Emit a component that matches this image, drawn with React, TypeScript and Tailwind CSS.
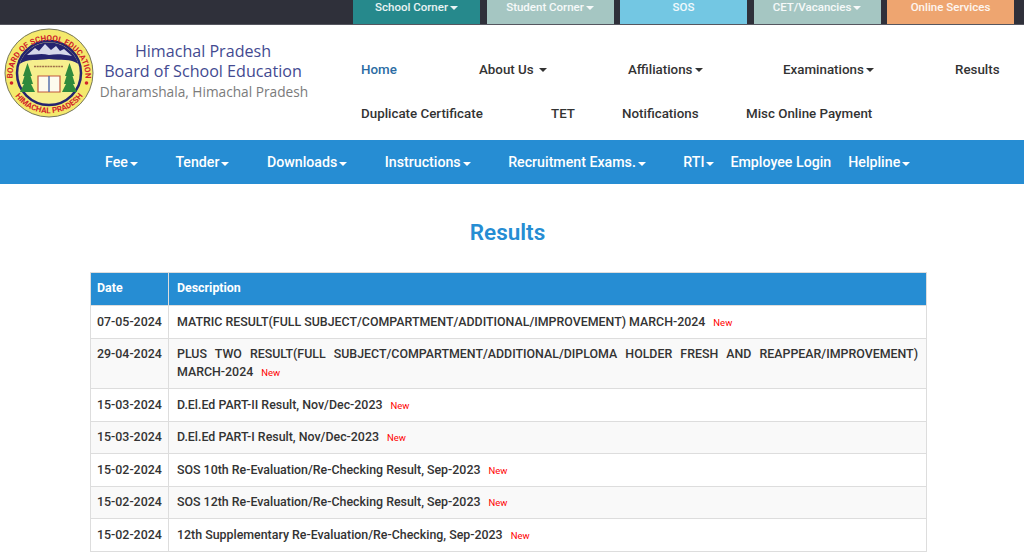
const TOP_TABS = [
  { label: 'School Corner', bg: 'bg-[#26898c]', caret: true },
  { label: 'Student Corner', bg: 'bg-[#a5c6c2]', caret: true },
  { label: 'SOS', bg: 'bg-[#73c7e3]', caret: false },
  { label: 'CET/Vacancies', bg: 'bg-[#a5c6c2]', caret: true },
  { label: 'Online Services', bg: 'bg-[#eea570]', caret: false },
];

const BLUE_LINKS = [
  { label: 'Fee', caret: true, cls: 'ml-[105px]' },
  { label: 'Tender', caret: true, cls: 'ml-[37.5px]' },
  { label: 'Downloads', caret: true, cls: 'ml-[37.5px]' },
  { label: 'Instructions', caret: true, cls: 'ml-[37.5px]' },
  { label: 'Recruitment Exams.', caret: true, cls: 'ml-[37.5px]' },
  { label: 'RTI', caret: true, cls: 'ml-[37.5px]' },
  { label: 'Employee Login', caret: false, cls: 'ml-[16px]' },
  { label: 'Helpline', caret: true, cls: 'ml-[17px]' },
];

const RESULTS = [
  { date: '07-05-2024', text: 'MATRIC RESULT(FULL SUBJECT/COMPARTMENT/ADDITIONAL/IMPROVEMENT) MARCH-2024' },
  { date: '29-04-2024', text: 'PLUS TWO RESULT(FULL SUBJECT/COMPARTMENT/ADDITIONAL/DIPLOMA HOLDER FRESH AND REAPPEAR/IMPROVEMENT) MARCH-2024' },
  { date: '15-03-2024', text: 'D.El.Ed PART-II Result, Nov/Dec-2023' },
  { date: '15-03-2024', text: 'D.El.Ed PART-I Result, Nov/Dec-2023' },
  { date: '15-02-2024', text: 'SOS 10th Re-Evaluation/Re-Checking Result, Sep-2023' },
  { date: '15-02-2024', text: 'SOS 12th Re-Evaluation/Re-Checking Result, Sep-2023' },
  { date: '15-02-2024', text: '12th Supplementary Re-Evaluation/Re-Checking, Sep-2023' },
];

function Caret({ className = '' }: { className?: string }) {
  return (
    <span className={`inline-block w-0 h-0 align-middle border-x-[4px] border-x-transparent border-t-[4px] border-t-current ${className}`} />
  );
}

// HPBOSE seal, drawn small like the blurry original
function Seal() {
  return (
    <svg width="90" height="90" viewBox="0 0 90 90" className="shrink-0">
      <defs>
        <path id="seal-top" d="M 8.6 52 A 36.5 36.5 0 1 1 81.4 52" fill="none" />
        <path id="seal-bottom" d="M 5 56 A 42 42 0 0 0 85 56" fill="none" />
      </defs>
      <circle cx="45" cy="45" r="44" fill="#f4e96c" stroke="#77775a" strokeWidth="1" />
      <circle cx="45" cy="45" r="32" fill="#f6ef8e" stroke="#25246f" strokeWidth="2.5" />
      <path d="M 15.5 36 A 31 31 0 0 1 74.5 36 C 66 30 58 33 45 31 C 33 33 24 30 15.5 36 Z" fill="#25246f" />
      <path d="M 23 27 L 31 20 L 35 23 L 41 16 L 47 22 L 52 18 L 56 23 L 60 21 L 68 28 C 58 26 52 26 45 27 C 37 25 31 27 23 27 Z" fill="#d6d8ea" />
      <path d="M 30 38.5 H 59" stroke="#a0704a" strokeWidth="1.5" strokeDasharray="2 0.7" />
      <path d="M 16 64 L 20 56 L 18 56 L 20.5 48 L 19 48 L 23.5 35 L 28 48 L 26.5 48 L 29 56 L 27 56 L 31 64 Z" fill="#2f8a3c" />
      <path d="M 58 64 L 62 56 L 60 56 L 62.5 48 L 61 48 L 65.5 35 L 70 48 L 68.5 48 L 71 56 L 69 56 L 73 64 Z" fill="#2f8a3c" />
      <path d="M 34 48 H 56 V 64 H 34 Z" fill="#fdfbee" stroke="#c0583c" strokeWidth="1.2" />
      <path d="M 45 48 V 64" stroke="#4a68a8" strokeWidth="1.4" />
      <text fontFamily="Roboto, sans-serif" fontSize="8" fontWeight="700" fill="#d1232a">
        <textPath href="#seal-top" startOffset="50%" textAnchor="middle">BOARD OF SCHOOL EDUCATION</textPath>
      </text>
      <text fontFamily="Roboto, sans-serif" fontSize="8" fontWeight="700" fill="#d1232a">
        <textPath href="#seal-bottom" startOffset="50%" textAnchor="middle">HIMACHAL PRADESH</textPath>
      </text>
      <circle cx="7.5" cy="55" r="1.8" fill="#d1232a" />
      <circle cx="82.5" cy="55" r="1.8" fill="#d1232a" />
    </svg>
  );
}

export default function App() {
  return (
    <div className="h-screen overflow-hidden bg-white font-['Roboto',sans-serif]">
      {/* Top strip */}
      <div className="h-[25px] bg-[#2f303a] border-b border-[#55565f] flex pl-[353px]">
        {TOP_TABS.map((tab) => (
          <div
            key={tab.label}
            className={`w-[127px] mr-[6.5px] h-[24px] ${tab.bg} flex justify-center pt-[1px] text-[11.5px] font-medium leading-[13px] text-white/90`}
          >
            <span>
              {tab.label}
              {tab.caret && <Caret className="ml-[2px]" />}
            </span>
          </div>
        ))}
      </div>

      {/* Logo + main menu */}
      <div className="h-[115px] flex">
        <div className="w-[361px] shrink-0 flex pl-[4px] pt-[3px]">
          <Seal />
          <div className="ml-[5px] w-[208px] pt-[14px] flex flex-col items-center font-['Open_Sans',sans-serif] font-medium">
            <div className="text-[16.1px] leading-[19.5px] text-[#434a91]">Himachal Pradesh</div>
            <div className="text-[16.1px] leading-[19.5px] text-[#434a91] whitespace-nowrap">Board of School Education</div>
            <div className="ml-[2px] text-[13.7px] leading-[21px] text-[#7b7b7b] whitespace-nowrap">Dharamshala, Himachal Pradesh</div>
          </div>
        </div>
        <div className="flex-1 text-[13.35px] font-medium text-[#333] leading-[16px]">
          <div className="flex pt-[36.5px]">
            <span className="text-[#2b6ca3] w-[118px]">Home</span>
            <span className="w-[149px]">About Us <Caret className="ml-[2px]" /></span>
            <span className="w-[155px]">Affiliations<Caret className="ml-[2px]" /></span>
            <span className="w-[172px]">Examinations<Caret className="ml-[2px]" /></span>
            <span>Results</span>
          </div>
          <div className="flex pt-[28px]">
            <span className="w-[190px]">Duplicate Certificate</span>
            <span className="w-[71px]">TET</span>
            <span className="w-[124px]">Notifications</span>
            <span>Misc Online Payment</span>
          </div>
        </div>
      </div>

      {/* Blue menu */}
      <div className="h-[44px] bg-[#268dd3] flex items-center pt-[2px] text-[14.2px] font-medium text-white">
        {BLUE_LINKS.map((link) => (
          <span key={link.label} className={`${link.cls} whitespace-nowrap`}>
            {link.label}
            {link.caret && <Caret className="ml-[2px]" />}
          </span>
        ))}
      </div>

      <h1 className="mt-[34px] mb-[26px] text-center text-[22.5px] leading-[28px] font-semibold text-[#268dd3] pr-[9px]">Results</h1>

      <div className="pl-[90px] pr-[97px]">
        <table className="w-full border-collapse table-fixed text-[12.4px] leading-[18px] font-medium text-[#333]">
          <thead>
            <tr className="bg-[#268dd3] text-white h-[33px]">
              <th className="w-[78px] border border-[#dddddd] px-[6px] pb-[2px] text-left font-bold">Date</th>
              <th className="border border-[#dddddd] px-[8px] pb-[2px] text-left font-bold">Description</th>
            </tr>
          </thead>
          <tbody>
            {RESULTS.map((row, i) => (
              <tr key={i} className={i % 2 === 1 ? 'bg-[#f9f9f9]' : 'bg-white'}>
                <td className="border border-[#dddddd] px-[6px] pt-[6.5px] pb-[7px] align-top whitespace-nowrap">{row.date}</td>
                <td className="border border-[#dddddd] px-[8px] pt-[6.5px] pb-[7px] text-justify align-top">
                  {row.text}
                  <span className="ml-[8px] text-[9.5px] leading-none font-normal text-[#f00]">New</span>
                </td>
              </tr>
            ))}
          </tbody>
        </table>
      </div>
    </div>
  );
}
